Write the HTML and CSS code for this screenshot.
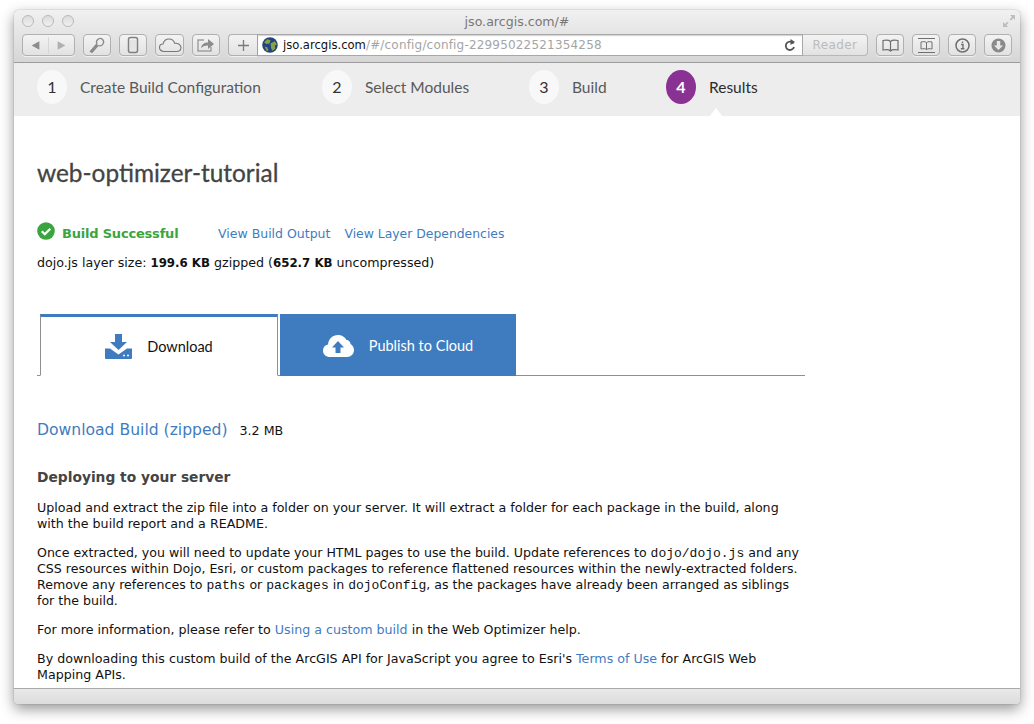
FILE: index.html
```html
<!DOCTYPE html>
<html lang="en">
<head>
<meta charset="utf-8">
<title>jso.arcgis.com/#</title>
<link rel="stylesheet" href="styles.css">
</head>
<body>
<div class="window">
  <header class="chrome">
    <div class="titlebar">
      <div class="lights"><i></i><i></i><i></i></div>
      <div class="title">jso.arcgis.com/#</div>
      <svg class="expand" width="14" height="14" viewBox="0 0 14 14"><path d="M8 1h5v5l-1.700-1.700-2.300 2.300-1.300-1.300 2.300-2.300zM1 8v5h5l-1.700-1.700 2.300-2.300-1.300-1.300-2.300 2.300z" fill="#bdbdbd"/></svg>
    </div>
    <div class="toolbar">
      <div class="btn nav">
        <svg width="53" height="21" viewBox="0 0 53 21"><path d="M17 6v9l-8-4.500z" fill="#8c8c8c"/><path d="M26.500 2v17" stroke="#d4d4d4"/><path d="M36 6v9l8-4.500z" fill="#b0b0b0"/></svg>
      </div>
      <div class="btn b28">
        <svg width="20" height="20" viewBox="0 0 20 20"><path d="M3.500 16.500l1.500 1 6-7c2 .8 4 .2 5-1.500s.6-3.500-.4-4.500-3-1.400-4.600-.2-1.800 3-1.200 4.700z" fill="none" stroke="#8a8a8a" stroke-width="1.300"/><path d="M4 16.500l6-6.500" stroke="#8a8a8a" stroke-width="2"/></svg>
      </div>
      <div class="btn b28">
        <svg width="12" height="18" viewBox="0 0 12 18"><rect x="1.500" y="1.500" width="9" height="15" rx="2" fill="none" stroke="#808080" stroke-width="1.500"/><path d="M3 4h6v9H3z" fill="#e4e4e4"/></svg>
      </div>
      <div class="btn b29">
        <svg width="24" height="16" viewBox="0 0 24 16"><path d="M6 14.500c-3 0-4.500-2-4.500-4s1.500-3.500 3.500-3.500c.8-3 3-5 6-5 2.800 0 5 1.800 5.700 4.300 3-.5 6.300 1.400 6.300 4.300s-2 3.900-4.500 3.900z" fill="none" stroke="#777" stroke-width="1.100"/></svg>
      </div>
      <div class="btn b28">
        <svg width="20" height="16" viewBox="0 0 20 16"><path d="M8 3H2v11h13v-4" fill="none" stroke="#a0a0a0" stroke-width="1.500"/><path d="M5 11c.5-3.500 3-5.500 7-5.500V2l6 5-6 5V8.500c-3 0-5 .8-7 2.500z" fill="#8c8c8c"/></svg>
      </div>
      <div class="urlgroup">
        <div class="btn plus">
          <svg width="11" height="11" viewBox="0 0 11 11"><path d="M5.500 0v11M0 5.500h11" stroke="#7a7a7a" stroke-width="1.300"/></svg>
        </div>
        <div class="url">
          <svg class="globe" width="16" height="16" viewBox="0 0 15 15"><circle cx="7.500" cy="7.500" r="7.300" fill="#24457c"/><path d="M2 5l3-3 3 1-1 3-3 .5zM8 6l4-2 2 3-2 1 .5 3-3 2-1-3zM2.500 9l2.500.5 1 3-1.500.8z" fill="#86a24a"/></svg>
          <span class="host">jso.arcgis.com</span><span class="path">/#/config/config-22995022521354258</span>
          <svg class="reload" width="12" height="13" viewBox="0 0 12 13"><path d="M9.500 4.500A4.200 4.200 0 1 0 10 8" fill="none" stroke="#555" stroke-width="1.800"/><path d="M6.500 0v6l4.500-3z" fill="#555"/></svg>
        </div>
        <div class="reader">Reader</div>
      </div>
      <div class="btn b28">
        <svg width="17" height="13" viewBox="0 0 17 13"><path d="M8.500 2.500C7 1 4 1 1 1.500v9.500c3-.5 6-.5 7.500 1 1.500-1.500 4.500-1.500 7.500-1V1.500c-3-.5-6-.5-7.500 1zv9.500" fill="none" stroke="#6f6f6f" stroke-width="1.200"/></svg>
      </div>
      <div class="btn b28">
        <svg width="17" height="15" viewBox="0 0 17 15"><path d="M0 .5h17M0 14.500h17" stroke="#6f6f6f"/><path d="M8.500 4.500C7 3.500 5 3.500 3 4v7c2-.5 4-.5 5.500.5 1.500-1 3.500-1 5.500-.5V4c-2-.5-4-.5-5.500.5zv7" fill="none" stroke="#6f6f6f"/></svg>
      </div>
      <div class="btn b28">
        <svg width="15" height="15" viewBox="0 0 15 15"><circle cx="7.500" cy="7.500" r="6.500" fill="none" stroke="#6f6f6f" stroke-width="1.500"/><path d="M6 6.500h2v4M5.800 10.800h3.600M7.500 3.500v1.500" fill="none" stroke="#6f6f6f" stroke-width="1.400"/></svg>
      </div>
      <div class="btn b28">
        <svg width="15" height="15" viewBox="0 0 15 15"><circle cx="7.500" cy="7.500" r="7" fill="#8a8a8a"/><path d="M5.800 3h3.400v4.500H12L7.500 12 3 7.500h2.800z" fill="#e8e8e8"/></svg>
      </div>
    </div>
  </header>

  <nav class="steps">
    <div class="step s1"><span class="num">1</span><span class="label">Create Build Configuration</span></div>
    <div class="step s2"><span class="num">2</span><span class="label">Select Modules</span></div>
    <div class="step s3"><span class="num">3</span><span class="label">Build</span></div>
    <div class="step s4 active"><span class="num">4</span><span class="label">Results</span></div>
  </nav>

  <main class="content">
    <h1>web-optimizer-tutorial</h1>
    <div class="status">
      <svg class="check" width="18" height="18" viewBox="0 0 18 18"><circle cx="9" cy="9" r="8.800" fill="#3aa53f"/><path d="M4.800 9.200l3 3 5.500-5.500" fill="none" stroke="#fff" stroke-width="2.300"/></svg>
      <strong class="ok">Build Successful</strong>
      <a class="l1">View Build Output</a>
      <a class="l2">View Layer Dependencies</a>
    </div>
    <p class="size">dojo.js layer size: <b>199.6 KB</b> gzipped (<b>652.7 KB</b> uncompressed)</p>

    <div class="tabs">
      <div class="tab on">
        <svg width="27" height="25" viewBox="0 0 27 25"><path d="M10 0h7v8h5l-8.500 8L5 8h5z" fill="#3f7cbf"/><path d="M0 14.500h5l8.500 6 8.500-6h5V24a1 1 0 0 1-1 1H1a1 1 0 0 1-1-1z" fill="#3f7cbf"/><circle cx="19" cy="21.500" r="1" fill="#fff"/><circle cx="23" cy="21.500" r="1" fill="#fff"/></svg>
        <span>Download</span>
      </div>
      <div class="tab off">
        <svg width="31" height="23" viewBox="0 0 31 23"><path d="M7 23c-4 0-7-2.500-7-6.500 0-3 2-5.500 5-6 .5-5.500 4.500-9.500 10-9.500 4 0 7 2 8.500 5 1.500 0 4 1.500 4 4 2 1 3.500 3.500 3.500 6 0 4-3 7-7 7z" fill="#fff"/><path d="M15 7l6 6.500h-3.500V19h-5v-5.500H9z" fill="#3f7cbf"/></svg>
        <span>Publish to Cloud</span>
      </div>
    </div>

    <div class="dl"><a>Download Build (zipped)</a><span>3.2 MB</span></div>

    <h2>Deploying to your server</h2>
    <p>Upload and extract the zip file into a folder on your server. It will extract a folder for each package in the build, along<br>with the build report and a README.</p>
    <p class="tight">Once extracted, you will need to update your HTML pages to use the build. Update references to <code>dojo/dojo.js</code> and any<br>CSS resources within Dojo, Esri, or custom packages to reference flattened resources within the newly-extracted folders.<br>Remove any references to <code>paths</code> or <code>packages</code> in <code>dojoConfig</code>, as the packages have already been arranged as siblings<br>for the build.</p>
    <p>For more information, please refer to <a>Using a custom build</a> in the Web Optimizer help.</p>
    <p>By downloading this custom build of the ArcGIS API for JavaScript you agree to Esri's <a>Terms of Use</a> for ArcGIS Web<br>Mapping APIs.</p>
  </main>
  <footer class="statusbar"></footer>
</div>
</body>
</html>
```

FILE: styles.css
```css
* { box-sizing: border-box; }
html, body { margin: 0; height: 100%; background: #fff; overflow: hidden; }
body { padding: 10px 14px 20px 14px; font-family: "DejaVu Sans", sans-serif; }

.window {
  width: 1006px; height: 694px;
  display: flex; flex-direction: column;
  border-radius: 5px 5px 4px 4px;
  background: #fff;
  box-shadow: 0 0 1px rgba(0,0,0,.55), 0 5px 14px rgba(0,0,0,.42);
  overflow: hidden;
}
.chrome {
  height: 53px; flex: none;
  background: linear-gradient(#f1f1f1, #d6d6d6);
  border-bottom: 1px solid #9c9c9c;
}
.titlebar { height: 24px; display: flex; align-items: center; position: relative; padding: 0 0 2px 8px; }
.lights { display: flex; gap: 8px; }
.lights i { width: 12px; height: 12px; border-radius: 50%; border: 1px solid #b8b8b8; background: linear-gradient(#dcdcdc, #f0f0f0); }
.title { position: absolute; left: 0; right: 0; text-align: center; font-size: 12.600px; color: #777; top: 4px; }
.expand { position: absolute; right: 4px; top: 4px; }

.toolbar { height: 22px; display: flex; align-items: center; padding-left: 8px; }
.btn {
  height: 22px; display: flex; align-items: center; justify-content: center;
  border: 1px solid #b0b0b0; border-radius: 4px;
  background: linear-gradient(#f3f3f3, #e2e2e2);
  box-shadow: 0 1px 0 rgba(255,255,255,.6);
}
.nav { width: 53px; margin-right: 8px; }
.b28 { width: 28px; margin-right: 8px; }
.b29 { width: 29px; margin-right: 8px; }
.urlgroup { display: flex; width: 640px; margin-right: 8px; height: 22px; }
.plus { width: 29px; border-radius: 4px 0 0 4px; border-right: 0; }
.url {
  flex: 1; display: flex; align-items: center; padding-left: 4px;
  background: #fff; border: 1px solid #a8a8a8; border-left-color: #a0a0a0;
  box-shadow: inset 0 1px 1px rgba(0,0,0,.18);
  font-size: 12px; white-space: nowrap; position: relative;
}
.globe { margin-right: 5px; flex: none; }
.host { color: #111; font-size: 11.600px; }
.path { color: #a5a5a5; letter-spacing: .18px; }
.reload { position: absolute; right: 6px; top: 4px; }
.reader {
  width: 65px; display: flex; align-items: center; justify-content: center;
  font-size: 12px; color: #bbb; letter-spacing: .4px;
  border: 1px solid #b8b8b8; border-left: 0; border-radius: 0 4px 4px 0;
  background: linear-gradient(#f3f3f3, #e2e2e2);
}

.steps {
  height: 53px; flex: none; background: #ededed; position: relative;
  display: flex; align-items: center; padding-bottom: 6px;
  font-family: Lato, sans-serif; color: #595959;
}
.step { display: flex; align-items: center; font-size: 15.500px; }
.num {
  width: 30px; height: 34px; border-radius: 15px / 17px; background: #f8f8f8;
  display: flex; align-items: center; justify-content: center;
  margin-right: 13px; color: #333; font-size: 16px;
}
.s1 { margin-left: 23px; }
.s2 { position: absolute; left: 308px; }
.s3 { position: absolute; left: 515px; }
.s4 { position: absolute; left: 652px; }
.active { color: #2c2c2c; }
.active .num { background: #8a3194; color: #fff; font-weight: 700; }
.active::after {
  content: ""; position: absolute; left: 43px; bottom: -13px;
  border: 7px solid transparent; border-top: 0; border-bottom: 9px solid #fff;
}

.content { flex: 1; padding: 0 23px; font-size: 12.650px; line-height: 16px; color: #111; overflow: hidden; }
h1 { margin: 41px 0 0; font: 400 24.400px/32px Lato, sans-serif; color: #444; -webkit-text-stroke: .3px #444; }
.status { display: flex; align-items: center; margin-top: 35px; height: 20px; position: relative; }
.check { flex: none; margin-right: 7px; position: relative; top: -3px; }
.ok { color: #3aa53f; font-weight: 700; font-size: 13px; letter-spacing: -.2px; width: 156px; }
a { color: #3f7cbf; }
.l1 { margin-right: 14px; font-size: 12.500px; }
.l2 { font-size: 12.400px; }
.content p.size { margin: 11px 0 0; }
.size b { font-size: 11.800px; }
.tabs { display: flex; margin-top: 43px; height: 62px; border-bottom: 1px solid #8f8f8f; width: 768px; padding-left: 3px; font: 14.500px Lato, sans-serif; }
.tab { display: flex; align-items: center; justify-content: center; gap: 15px; height: 62px; }
.tab.on { width: 238px; background: #fff; border-top: 3px solid #3f7cbf; border-left: 1px solid #8f8f8f; border-right: 1px solid #8f8f8f; border-bottom: 1px solid #fff; margin-right: 2px; color: #111; }
.tab.off { width: 236px; background: #3f7cbf; color: #fff; }
.dl { margin-top: 44px; display: flex; align-items: baseline; gap: 12px; }
.dl a { font-size: 15.600px; line-height: 20px; }
h2 { margin: 28px 0 14px; font-size: 13.800px; line-height: 18px; font-weight: 700; color: #444; }
.content p { margin: 0 0 13px; }
.content p.tight { font-size: 12.580px; }
code { font-family: "Liberation Mono", monospace; font-size: 13px; line-height: 1; }
.statusbar { height: 16px; flex: none; background: linear-gradient(#e9e9e9, #dcdcdc); border-top: 1px solid #a9a9a9; }
```
